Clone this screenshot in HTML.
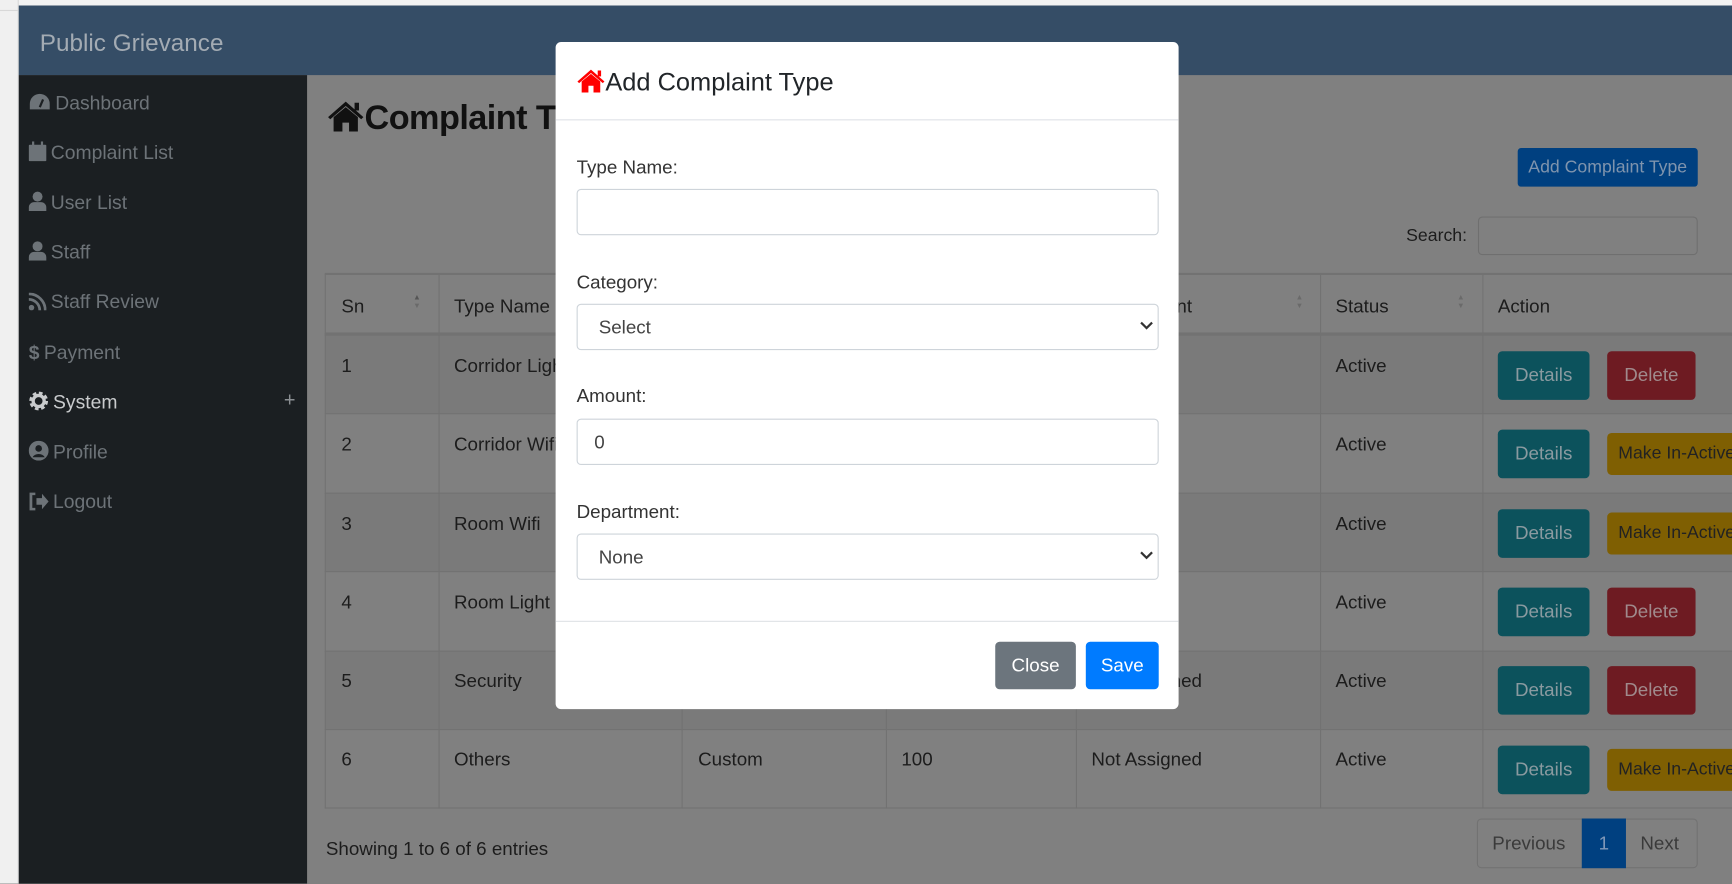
<!DOCTYPE html>
<html><head><meta charset="utf-8"><style>
*{box-sizing:border-box;margin:0;padding:0}
html,body{width:1732px;height:884px;overflow:hidden;background:#808080;font-family:"Liberation Sans",sans-serif}
#w{position:absolute;left:0;top:0;width:1568px;height:800px;transform:scale(1.10459);transform-origin:0 0;background:#808080;overflow:hidden}
.a{position:absolute;white-space:nowrap}
.si{position:absolute;left:26px;color:#6d7378;font-size:17.5px}
.si svg{vertical-align:-2px;margin-right:4px}
.t{position:absolute;font-size:17px;color:#1c1c1c}
.vl{position:absolute;width:1px;background:#727272}
.hl{position:absolute;height:1px;background:#727272;left:294px;width:1274px}
.btn{position:absolute;border-radius:4px;font-size:17px;text-align:center}
.det{background:#0c525c;color:#8a9aa0;width:83px;height:44px;line-height:44px;left:1356px}
.del{background:#6e1b22;color:#a08a8c;width:80px;height:44px;line-height:44px;left:1455px}
.mk{background:#7f5f02;color:#222;width:130px;height:38px;line-height:38px;left:1455px;font-size:16px;padding-left:10px;text-align:left}
.lbl{position:absolute;left:522px;font-size:17px;color:#333}
.inp{position:absolute;left:522px;width:527px;height:42px;border:1px solid #ced4da;border-radius:4px;background:#fff;font-size:17px;color:#444;padding:11px 0 0 19px}
</style></head><body><div id="w">
<div class="a" style="left:0;top:0;width:1568px;height:5px;background:#f2f2f2"></div>
<div class="a" style="left:0;top:0;width:17px;height:800px;background:#f0f0f0;border-right:1px solid #d8d8d8"></div>
<div class="a" style="left:0;top:9px;width:16px;height:1px;background:#d8d8d8"></div>
<div class="a" style="left:17px;top:5px;width:1551px;height:63px;background:#354d66"></div>
<div class="a" style="left:36px;top:26px;font-size:22px;color:#a3abb3">Public Grievance</div>
<div class="a" style="left:17px;top:68px;width:261px;height:732px;background:#1b1f22"></div>
<div class="si" style="top:83px"><svg width="20" height="17" viewBox="0 0 20 17"><path d="M10 1A9 9 0 0 0 1 10v5h18v-5A9 9 0 0 0 10 1z" fill="#6d7378"/><path d="M10 13l3-7" stroke="#1b1f22" stroke-width="2"/></svg>Dashboard</div>
<div class="si" style="top:128px"><svg width="16" height="18" viewBox="0 0 16 18"><rect x="0" y="3" width="16" height="15" rx="1" fill="#6d7378"/><rect x="3" y="0" width="2" height="4" fill="#6d7378"/><rect x="11" y="0" width="2" height="4" fill="#6d7378"/></svg>Complaint List</div>
<div class="si" style="top:173px"><svg width="16" height="18" viewBox="0 0 16 18"><circle cx="8" cy="5" r="4.5" fill="#6d7378"/><path d="M0 18v-3a5 5 0 0 1 5-5h6a5 5 0 0 1 5 5v3z" fill="#6d7378"/></svg>User List</div>
<div class="si" style="top:218px"><svg width="16" height="18" viewBox="0 0 16 18"><circle cx="8" cy="5" r="4.5" fill="#6d7378"/><path d="M0 18v-3a5 5 0 0 1 5-5h6a5 5 0 0 1 5 5v3z" fill="#6d7378"/></svg>Staff</div>
<div class="si" style="top:263px"><svg width="16" height="16" viewBox="0 0 16 16"><circle cx="2.5" cy="13.5" r="2.5" fill="#6d7378"/><path d="M0 6a10 10 0 0 1 10 10M0 1a15 15 0 0 1 15 15" stroke="#6d7378" stroke-width="2.5" fill="none"/></svg>Staff Review</div>
<div class="si" style="top:309px"><span style="font-weight:bold;margin-right:4px">$</span>Payment</div>
<div class="si" style="top:354px;color:#c9cbcd"><svg width="18" height="18" viewBox="0 0 18 18"><circle cx="9" cy="9" r="6.5" fill="none" stroke="#c9cbcd" stroke-width="4" stroke-dasharray="3 2.1"/><circle cx="9" cy="9" r="5" fill="none" stroke="#c9cbcd" stroke-width="3"/></svg>System</div>
<div class="a" style="left:257px;top:352px;color:#8a8e92;font-size:18px">+</div>
<div class="si" style="top:399px"><svg width="18" height="18" viewBox="0 0 18 18"><circle cx="9" cy="9" r="9" fill="#6d7378"/><circle cx="9" cy="7" r="3" fill="#1b1f22"/><path d="M3.5 15a6 5 0 0 1 11 0" fill="#1b1f22"/></svg>Profile</div>
<div class="si" style="top:444px"><svg width="18" height="16" viewBox="0 0 18 16"><path d="M6 1H2v14h4" stroke="#6d7378" stroke-width="2.5" fill="none"/><path d="M7 5h5V1l6 7-6 7v-4H7z" fill="#6d7378"/></svg>Logout</div>
<div class="a" style="left:296px;top:89px;font-size:31px;color:#111;font-weight:bold;letter-spacing:-0.5px"><svg width="34" height="28" viewBox="0 0 34 28" style="vertical-align:-2px"><path d="M17 1L1 15l2 2 14-12 14 12 2-2z" fill="#111"/><path d="M6 15v13h8v-8h6v8h8V15L17 6z" fill="#111"/><rect x="25" y="2" width="4" height="7" fill="#111"/></svg>Complaint T</div>
<div class="btn" style="left:1374px;top:134px;width:163px;height:35px;line-height:35px;background:#004080;color:#7f94ad;font-size:16px;border-radius:3px">Add Complaint Type</div>
<div class="a" style="left:1273px;top:205px;font-size:16px;color:#1c1c1c">Search:</div>
<div class="a" style="left:1338px;top:196px;width:199px;height:35px;border:1px solid #6f6f6f;border-radius:4px"></div>
<div class="a" style="left:294px;top:302px;width:1274px;height:72px;background:#7a7a7a"></div>
<div class="a" style="left:294px;top:446px;width:1274px;height:71px;background:#7a7a7a"></div>
<div class="a" style="left:294px;top:589px;width:1274px;height:71px;background:#7a7a7a"></div>
<div class="hl" style="top:247px;height:2px"></div><div class="hl" style="top:301px;height:3px"></div>
<div class="hl" style="top:374px"></div><div class="hl" style="top:446px"></div><div class="hl" style="top:517px"></div><div class="hl" style="top:589px"></div><div class="hl" style="top:660px"></div><div class="hl" style="top:731px"></div>
<div class="vl" style="left:294px;top:248px;height:484px"></div><div class="vl" style="left:397px;top:248px;height:484px"></div><div class="vl" style="left:617px;top:248px;height:484px"></div><div class="vl" style="left:802px;top:248px;height:484px"></div><div class="vl" style="left:974px;top:248px;height:484px"></div><div class="vl" style="left:1195px;top:248px;height:484px"></div><div class="vl" style="left:1342px;top:248px;height:484px"></div>
<div class="t" style="left:309px;top:268px">Sn</div><div class="t" style="left:411px;top:268px">Type Name</div><div class="t" style="left:1065px;top:268px">nt</div><div class="t" style="left:1209px;top:268px">Status</div><div class="t" style="left:1356px;top:268px">Action</div>
<div class="a" style="left:374px;top:266px;font-size:7px;color:#555;line-height:8px">▲<br><span style="color:#6a6a6a">▼</span></div>
<div class="a" style="left:1173px;top:266px;font-size:7px;color:#6a6a6a;line-height:8px">▲<br>▼</div>
<div class="a" style="left:1319px;top:266px;font-size:7px;color:#6a6a6a;line-height:8px">▲<br>▼</div>
<div class="t" style="left:309px;top:322px">1</div><div class="t" style="left:411px;top:322px">Corridor Light</div><div class="t" style="left:1209px;top:322px">Active</div>
<div class="t" style="left:309px;top:393px">2</div><div class="t" style="left:411px;top:393px">Corridor Wifi</div><div class="t" style="left:1209px;top:393px">Active</div>
<div class="t" style="left:309px;top:465px">3</div><div class="t" style="left:411px;top:465px">Room Wifi</div><div class="t" style="left:1209px;top:465px">Active</div>
<div class="t" style="left:309px;top:536px">4</div><div class="t" style="left:411px;top:536px">Room Light</div><div class="t" style="left:1209px;top:536px">Active</div>
<div class="t" style="left:309px;top:607px">5</div><div class="t" style="left:411px;top:607px">Security</div><div class="t" style="left:988px;top:607px">Not Assigned</div><div class="t" style="left:1209px;top:607px">Active</div>
<div class="t" style="left:309px;top:678px">6</div><div class="t" style="left:411px;top:678px">Others</div><div class="t" style="left:632px;top:678px">Custom</div><div class="t" style="left:816px;top:678px">100</div><div class="t" style="left:988px;top:678px">Not Assigned</div><div class="t" style="left:1209px;top:678px">Active</div>
<div class="btn det" style="top:318px">Details</div><div class="btn del" style="top:318px">Delete</div>
<div class="btn det" style="top:389px">Details</div><div class="btn mk" style="top:392px">Make In-Active</div>
<div class="btn det" style="top:461px">Details</div><div class="btn mk" style="top:464px">Make In-Active</div>
<div class="btn det" style="top:532px">Details</div><div class="btn del" style="top:532px">Delete</div>
<div class="btn det" style="top:603px">Details</div><div class="btn del" style="top:603px">Delete</div>
<div class="btn det" style="top:675px">Details</div><div class="btn mk" style="top:678px">Make In-Active</div>
<div class="a" style="left:295px;top:759px;font-size:17px;color:#1c1c1c">Showing 1 to 6 of 6 entries</div>
<div class="a" style="left:1337px;top:741px;width:200px;height:45px;border:1px solid #727272;border-radius:4px"></div>
<div class="a" style="left:1351px;top:754px;font-size:17px;color:#3a3a3a">Previous</div>
<div class="a" style="left:1432px;top:741px;width:40px;height:45px;background:#004080;color:#8098b8;font-size:17px;text-align:center;line-height:45px">1</div>
<div class="a" style="left:1485px;top:754px;font-size:17px;color:#3a3a3a">Next</div>
<div class="a" style="left:503px;top:38px;width:564px;height:604px;background:#fff;border-radius:5px"></div>
<div class="a" style="left:503px;top:108px;width:564px;height:1px;background:#dee2e6"></div>
<div class="a" style="left:522px;top:61px;font-size:23px;color:#212529"><svg width="26" height="22" viewBox="0 0 34 28" style="vertical-align:-2px"><path d="M17 1L1 15l2 2 14-12 14 12 2-2z" fill="#f00"/><path d="M6 15v13h8v-8h6v8h8V15L17 6z" fill="#f00"/><rect x="25" y="2" width="4" height="7" fill="#f00"/></svg>Add Complaint Type</div>
<div class="lbl" style="top:142px">Type Name:</div><div class="inp" style="top:171px"></div>
<div class="lbl" style="top:246px">Category:</div><div class="inp" style="top:275px">Select</div>
<div class="lbl" style="top:349px">Amount:</div><div class="inp" style="top:379px;padding-left:15px">0</div>
<div class="lbl" style="top:454px">Department:</div><div class="inp" style="top:483px">None</div>
<svg class="a" style="left:1032px;top:291px" width="12" height="8" viewBox="0 0 12 8"><path d="M1 1l5 5 5-5" stroke="#333" stroke-width="2" fill="none"/></svg>
<svg class="a" style="left:1032px;top:499px" width="12" height="8" viewBox="0 0 12 8"><path d="M1 1l5 5 5-5" stroke="#333" stroke-width="2" fill="none"/></svg>
<div class="a" style="left:503px;top:562px;width:564px;height:1px;background:#dee2e6"></div>
<div class="btn" style="left:901px;top:581px;width:73px;height:43px;line-height:43px;background:#6c757d;color:#fff">Close</div>
<div class="btn" style="left:983px;top:581px;width:66px;height:43px;line-height:43px;background:#007bff;color:#fff">Save</div>
</div></body></html>
